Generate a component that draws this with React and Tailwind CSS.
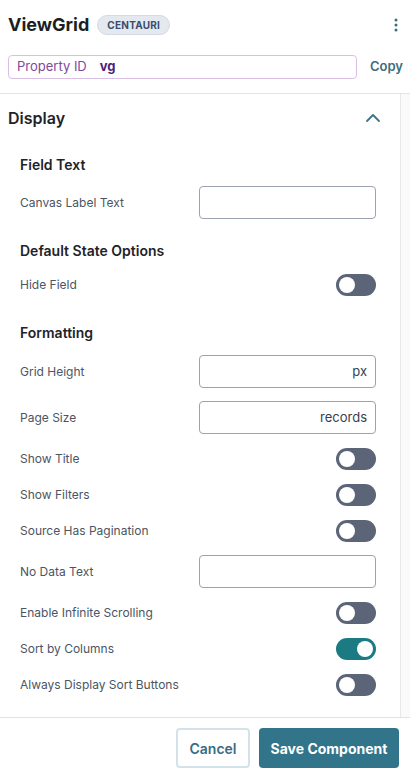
import React from "react";

function Toggle({ on }) {
  return (
    <div
      className={
        "w-[40px] h-[22px] rounded-full flex items-center px-[3px] " +
        (on ? "bg-[#1c7b82] justify-end" : "bg-[#5b6577] justify-start")
      }
    >
      <div className="w-[16px] h-[16px] rounded-full bg-white" />
    </div>
  );
}

function ToggleRow({ label, on }) {
  return (
    <div className="flex items-center justify-between h-[23px]">
      <span className="text-[12px] text-[#4b5563]">{label}</span>
      <Toggle on={on} />
    </div>
  );
}

function InputRow({ label, suffix }) {
  return (
    <div className="flex items-center justify-between">
      <span className="text-[12px] text-[#4b5563]">{label}</span>
      <div className="w-[177px] h-[33px] border border-[#9ca3af] rounded-[4px] flex items-center justify-end px-2 text-[13px] text-[#374151]">
        {suffix}
      </div>
    </div>
  );
}

function Heading({ children }) {
  return (
    <div className="h-[20px] flex items-center text-[14px] font-semibold text-[#1f2328]">
      {children}
    </div>
  );
}

export default function App() {
  return (
    <div
      className="w-[410px] h-[775px] bg-white flex flex-col overflow-hidden"
      style={{ fontFamily: "Inter, 'Liberation Sans', sans-serif" }}
    >
      {/* Header */}
      <div className="pl-2 pr-[7px] pt-[14px] pb-[14px] border-b border-[#e2e4e8]">
        <div className="flex items-center justify-between h-[22px]">
          <div className="flex items-center gap-2">
            <h1 className="text-[18px] font-bold text-[#1b1f24] leading-none">ViewGrid</h1>
            <span className="h-[20px] px-[9px] rounded-full bg-[#e4e8ef] border border-[#d3dae4] text-[10px] font-bold tracking-wide text-[#3b4b6b] flex items-center">
              CENTAURI
            </span>
          </div>
          <svg width="4" height="14" viewBox="0 0 4 14" className="mr-[5px]">
            <circle cx="2" cy="2" r="1.5" fill="#3d6b80" />
            <circle cx="2" cy="7" r="1.5" fill="#3d6b80" />
            <circle cx="2" cy="12" r="1.5" fill="#3d6b80" />
          </svg>
        </div>
        <div className="flex items-center justify-between mt-[19px]">
          <div className="w-[349px] h-[24px] border border-[#d9bfe6] rounded-[4px] flex items-center px-2 gap-[13px] text-[13px]">
            <span className="text-[#7b4aa0]">Property ID</span>
            <span className="font-bold text-[#4d2278]">vg</span>
          </div>
          <span className="text-[13px] font-semibold text-[#3e6c7d]">Copy</span>
        </div>
      </div>

      {/* Body */}
      <div className="flex h-[623px]">
        <div className="flex-1 overflow-hidden">
          <div className="h-12 flex items-center justify-between pl-2 pr-[19px]">
            <span className="text-[16px] font-semibold text-[#1f2328]">Display</span>
            <svg width="16" height="10" viewBox="0 0 16 10" fill="none">
              <path d="M2 8 L8 2 L14 8" stroke="#3d7389" strokeWidth="1.8" strokeLinecap="round" strokeLinejoin="round" />
            </svg>
          </div>
          <div className="pl-5 pr-[24px]">
            <div className="mt-[12px] flex flex-col gap-[12px]">
              <Heading>Field Text</Heading>
              <InputRow label="Canvas Label Text" />
            </div>
            <div className="mt-[21px] flex flex-col gap-[13px]">
              <Heading>Default State Options</Heading>
              <ToggleRow label="Hide Field" />
            </div>
            <div className="mt-[26px] flex flex-col gap-[13px]">
              <Heading>Formatting</Heading>
              <InputRow label="Grid Height" suffix="px" />
              <InputRow label="Page Size" suffix="records" />
              <ToggleRow label="Show Title" />
              <ToggleRow label="Show Filters" />
              <ToggleRow label="Source Has Pagination" />
              <InputRow label="No Data Text" />
              <ToggleRow label="Enable Infinite Scrolling" />
              <ToggleRow label="Sort by Columns" on />
              <ToggleRow label="Always Display Sort Buttons" />
            </div>
          </div>
        </div>
        <div className="w-[10px] border-l border-[#e6e8eb] bg-[#fafafa]" />
      </div>

      {/* Footer */}
      <div className="border-t border-[#dfe2e6] flex justify-end gap-[9px] pr-[11px] pt-[10px]">
        <button className="w-[74px] h-[40px] rounded-[4px] border-2 border-[#d4e3ea] text-[14px] font-semibold text-[#3b6b80] bg-white">
          Cancel
        </button>
        <button className="w-[140px] h-[40px] rounded-[4px] bg-[#32748a] text-[14px] font-bold text-white">
          Save Component
        </button>
      </div>
    </div>
  );
}
